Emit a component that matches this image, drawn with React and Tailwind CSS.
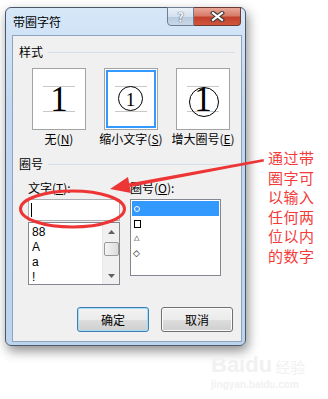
export default function App() {
  const btnBg =
    "bg-[linear-gradient(to_bottom,#f2f2f2_0%,#ebebeb_50%,#dddddd_51%,#cfcfcf_100%)]";
  return (
    <div className="relative w-[328px] h-[399px] bg-white overflow-hidden font-['Noto_Sans_CJK_SC',sans-serif] text-[12px] text-black">
      {/* Dialog */}
      <div className="ml-[5px] mt-[7px] w-[241px] h-[339px] rounded-[6px] border border-[#4b5868] bg-[linear-gradient(to_bottom,#d6e7f8,#c2d8f0_30%,#bcd4ee)] flex flex-col shadow-[2px_5px_12px_rgba(0,0,0,0.45)]">
        {/* Title bar */}
        <div className="h-[27px] flex items-start shrink-0">
          <span className="ml-[7px] mt-[7px] leading-[14px]">带圈字符</span>
          <div className="ml-auto mr-[4px] -mt-px flex h-[19px]">
            <div className="w-[27px] h-full border border-[#6e7f95] rounded-bl-[4px] bg-[linear-gradient(to_bottom,#eaf1f8,#d3e0ee_50%,#b9cade_51%,#c9d8e8)] flex items-center justify-center text-[13px] leading-none font-bold text-[#f4f7fa] [text-shadow:0_0_1px_#47566a,0_0_1px_#47566a]">
              ?
            </div>
            <div className="w-[47px] h-full border border-l-0 border-[#6b3a33] rounded-br-[4px] bg-[linear-gradient(to_bottom,#e9a797,#d77c6a_45%,#c2412c_55%,#d0553c)] flex items-center justify-center">
              <svg width="15" height="11" viewBox="0 0 15 11">
                <path d="M3 2 L12 9 M12 2 L3 9" stroke="#3a3a3a" strokeWidth="4.2" strokeLinecap="square" />
                <path d="M3 2 L12 9 M12 2 L3 9" stroke="#ffffff" strokeWidth="2.2" strokeLinecap="square" />
              </svg>
            </div>
          </div>
        </div>

        {/* Client area */}
        <div className="ml-[6px] mr-[3px] mb-[3px] flex-1 border border-[#8ea3bd] bg-[#f0f0f0] flex flex-col">
          {/* 样式 group label */}
          <div className="mt-[9px] h-[14px] flex items-center pl-[6px] pr-[6px]">
            <span className="leading-[14px]">样式</span>
            <div className="ml-[5px] flex-1 h-px bg-[#d5dfe5]" />
          </div>

          {/* Preview boxes */}
          <div className="mt-[9px] flex pl-[19px] gap-[18px]">
            {/* 无 */}
            <div className="flex flex-col items-center w-[54px]">
              <div className="relative w-[54px] h-[62px] border border-[#a3a3a3] bg-white">
                <div className="absolute left-[10px] top-[17px] w-[32px] h-px bg-[#c8c8c8]" />
                <div className="absolute left-[10px] top-[42px] w-[32px] h-px bg-[#c8c8c8]" />
                <div className="absolute left-0 right-0 top-[13px] text-center font-['Liberation_Serif',serif] text-[35px] leading-none">
                  1
                </div>
              </div>
              <div className="mt-[2px] leading-[14px] whitespace-nowrap">
                无(<span className="underline">N</span>)
              </div>
            </div>
            {/* 缩小文字 */}
            <div className="flex flex-col items-center w-[54px]">
              <div className="relative w-[54px] h-[62px] border border-[#a3a3a3] bg-white">
                <div className="absolute inset-[1px] border-2 border-[#3399ff]" />
                <div className="absolute left-[10px] top-[17px] w-[32px] h-px bg-[#c8c8c8]" />
                <div className="absolute left-[10px] top-[42px] w-[32px] h-px bg-[#c8c8c8]" />
                <div className="absolute left-[13px] top-[17px] w-[25px] h-[25px] rounded-full border border-black flex items-center justify-center font-['Liberation_Serif',serif] text-[19px] leading-none">
                  <span className="mt-[1px]">1</span>
                </div>
              </div>
              <div className="mt-[2px] leading-[14px] whitespace-nowrap">
                缩小文字(<span className="underline">S</span>)
              </div>
            </div>
            {/* 增大圈号 */}
            <div className="flex flex-col items-center w-[54px]">
              <div className="relative w-[54px] h-[62px] border border-[#a3a3a3] bg-white">
                <div className="absolute left-[10px] top-[17px] w-[32px] h-px bg-[#c8c8c8]" />
                <div className="absolute left-[10px] top-[42px] w-[32px] h-px bg-[#c8c8c8]" />
                <div className="absolute left-[12px] top-[18px] w-[30px] h-[30px] rounded-full border border-black" />
                <div className="absolute left-0 right-0 top-[13px] text-center font-['Liberation_Serif',serif] text-[35px] leading-none">
                  1
                </div>
              </div>
              <div className="mt-[2px] leading-[14px] whitespace-nowrap">
                增大圈号(<span className="underline">E</span>)
              </div>
            </div>
          </div>

          {/* 圈号 group label */}
          <div className="mt-[11px] h-[14px] flex items-center pl-[6px] pr-[6px]">
            <span className="leading-[14px]">圈号</span>
            <div className="ml-[5px] flex-1 h-px bg-[#d5dfe5]" />
          </div>

          {/* Field labels */}
          <div className="mt-[10px] h-[14px] flex pl-[15px] gap-[10px]">
            <div className="w-[92px] leading-[14px]">
              文字(<span className="underline">T</span>):
            </div>
            <div className="w-[91px] leading-[14px]">
              圈号(<span className="underline">O</span>):
            </div>
          </div>

          {/* Inputs */}
          <div className="mt-[4px] flex pl-[15px] gap-[10px] items-start">
            <div className="w-[92px] flex flex-col">
              <div className="h-[22px] border border-[#abadb3] bg-white flex items-center pl-[2px]">
                <div className="w-px h-[14px] bg-black" />
              </div>
              <div className="mt-[1px] h-[63px] border border-[#828790] bg-white flex overflow-hidden">
                <div className="flex-1 pt-[2px] pl-[3px] font-['Liberation_Sans',sans-serif] text-[12px]">
                  <div className="h-[15px] leading-[15px]">88</div>
                  <div className="h-[15px] leading-[15px]">A</div>
                  <div className="h-[15px] leading-[15px]">a</div>
                  <div className="h-[15px] leading-[15px]">!</div>
                </div>
                <div className="w-[17px] bg-[#f0f0f0] flex flex-col items-center border-l border-[#e8e8e8]">
                  <div className="h-[17px] flex items-center justify-center">
                    <svg width="7" height="4" viewBox="0 0 7 4">
                      <path d="M3.5 0 L7 4 L0 4 Z" fill="#606060" />
                    </svg>
                  </div>
                  <div className="mt-[2px] w-[15px] h-[14px] rounded-[2px] border border-[#9a9a9a] bg-[linear-gradient(to_right,#f4f4f4,#dcdcdc)]" />
                  <div className="flex-1" />
                  <div className="h-[17px] flex items-center justify-center">
                    <svg width="7" height="4" viewBox="0 0 7 4">
                      <path d="M0 0 L7 0 L3.5 4 Z" fill="#606060" />
                    </svg>
                  </div>
                </div>
              </div>
            </div>
            <div className="w-[91px] h-[77px] border border-[#828790] bg-white p-[1px] font-['DejaVu_Sans',sans-serif] text-black">
              <div className="h-[15px] bg-[#3399ff] flex items-center pl-[2px]">
                <div className="w-[6px] h-[6px] rounded-full border border-white" />
              </div>
              <div className="h-[15px] flex items-center pl-[2px]">
                <div className="w-[7px] h-[8px] border border-black" />
              </div>
              <div className="h-[15px] flex items-center pl-[2px] text-[7px] leading-none font-bold">
                △
              </div>
              <div className="h-[15px] flex items-center pl-[1px] text-[9px] leading-none font-bold">
                ◇
              </div>
            </div>
          </div>

          {/* Buttons */}
          <div className="mt-auto mb-[9px] pr-[8px] flex justify-end gap-[12px]">
            <div className={`w-[72px] h-[25px] rounded-[3px] border border-[#3c7fb1] ${btnBg} shadow-[inset_0_0_0_1px_#a8dcf7] flex items-center justify-center`}>
              确定
            </div>
            <div className={`w-[72px] h-[25px] rounded-[3px] border border-[#707070] ${btnBg} shadow-[inset_0_0_0_1px_#fbfbfb] flex items-center justify-center`}>
              取消
            </div>
          </div>
        </div>
      </div>

      {/* Annotation: ellipse + arrow */}
      <svg className="absolute left-0 top-0 pointer-events-none" width="328" height="399" viewBox="0 0 328 399">
        <ellipse cx="72.5" cy="209" rx="52" ry="18" fill="none" stroke="#ee3535" strokeWidth="3" />
        <polygon points="110,189 128,177 131,193" fill="#ee3535" />
        <polygon points="128.5,183.5 130,187 264,161.5 263.5,159" fill="#ee3535" />
      </svg>

      {/* Annotation text */}
      <div className="absolute left-[268px] top-[148px] text-[15px] leading-[19.6px] text-[#f23b3b] tracking-[0.5px] whitespace-nowrap">
        <div>通过带</div>
        <div>圈字可</div>
        <div>以输入</div>
        <div>任何两</div>
        <div>位以内</div>
        <div>的数字</div>
      </div>

      {/* Watermark */}
      <div className="absolute left-[211px] top-[354px] text-[#f1f1f1] leading-none whitespace-nowrap">
        <div className="flex items-end gap-[3px]">
          <span className="font-['Liberation_Sans',sans-serif] font-bold text-[22px]">Baidu</span>
          <span className="text-[15px] mb-[2px]">经验</span>
        </div>
        <div className="mt-[4px] font-['Liberation_Sans',sans-serif] text-[10px] font-bold">jingyan.baidu.com</div>
      </div>
    </div>
  );
}
